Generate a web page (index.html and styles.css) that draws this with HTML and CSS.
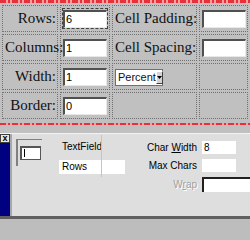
FILE: index.html
```html
<!DOCTYPE html>
<html>
<head>
<meta charset="utf-8">
<link rel="stylesheet" href="styles.css">
</head>
<body>
<div class="design">
  <div class="redline top"></div>
  <table class="grid">
    <colgroup><col class="c1"><col class="c2"><col class="c3"><col class="c4"></colgroup>
    <tr>
      <td class="lbl">Rows:</td>
      <td><span class="focus"><span class="box">6</span></span></td>
      <td class="lbl">Cell Padding:</td>
      <td><span class="box"></span></td>
    </tr>
    <tr>
      <td class="lbl">Columns:</td>
      <td><span class="box">1</span></td>
      <td class="lbl">Cell Spacing:</td>
      <td><span class="box"></span></td>
    </tr>
    <tr>
      <td class="lbl">Width:</td>
      <td><span class="box">1</span></td>
      <td><span class="select"><span class="sel-text">Percent</span><span class="sel-btn"><svg width="5" height="3" viewBox="0 0 5 3"><path d="M0 0h5L2.5 3z" fill="#000"/></svg></span></span></td>
      <td></td>
    </tr>
    <tr>
      <td class="lbl">Border:</td>
      <td><span class="box">0</span></td>
      <td></td>
      <td></td>
    </tr>
  </table>
  <div class="redline bottom"></div>
</div>
<div class="panel">
  <div class="side">
    <span class="close">x</span>
  </div>
  <div class="content">
    <div class="iconbox">
      <span class="tficon"><span class="caret"></span></span>
    </div>
    <div class="namecol">
      <div class="tname">TextField</div>
      <div class="namefield">Rows</div>
    </div>
    <div class="props">
      <div class="prow"><span class="plbl">Char <u>W</u>idth</span><span class="pin">8</span></div>
      <div class="prow"><span class="plbl">Max Chars</span><span class="pin"></span></div>
      <div class="prow"><span class="plbl dis">W<u>r</u>ap</span><span class="pin wrap"></span></div>
    </div>
  </div>
</div>
<div class="status"></div>
</body>
</html>
```
FILE: styles.css
```css
html, body {
  margin: 0;
  padding: 0;
  width: 250px;
  height: 240px;
  overflow: hidden;
  background: #bdbdbd;
}
.design {
  background: #c0c0c0;
  height: 133px;
  overflow: hidden;
}
.redline {
  height: 2px;
  background: repeating-linear-gradient(90deg, #e8303a 0 6px, #f0a0a0 6px 8px, #e8303a 8px 10px, #f0a0a0 10px 12px);
}
.redline.top { height: 3px; }
.redline.bottom { margin-top: 2px; }
.grid {
  border-collapse: separate;
  border-spacing: 2px;
  table-layout: fixed;
  width: 250px;
  font-family: "Liberation Serif", "Times New Roman", serif;
  font-size: 15px;
  color: #111;
}
.c1 { width: 56px; }
.c2 { width: 50px; }
.c3 { width: 85px; }
.c4 { width: 49px; }
.grid td {
  border: 1px dotted #707070;
  height: 25px;
  padding: 0 1px 0 2px;
  white-space: nowrap;
  vertical-align: middle;
}
.lbl { text-align: right; }
.box {
  display: inline-block;
  vertical-align: middle;
  box-sizing: border-box;
  width: 44px;
  height: 18px;
  background: #fff;
  border-style: solid;
  border-width: 2px 1px 1px 2px;
  border-color: #505050 #e8e8e8 #e8e8e8 #505050;
  font-family: "Liberation Sans", Arial, sans-serif;
  font-size: 11px;
  line-height: 14px;
  padding-left: 1px;
  color: #000;
}
.focus {
  display: inline-block;
  vertical-align: middle;
  border: 1px dashed #404040;
  padding: 0;
  margin-left: -1px;
}
.select {
  display: inline-flex;
  vertical-align: middle;
  box-sizing: border-box;
  height: 17px;
  width: 48px;
  background: #fff;
  border: 1px solid #707070;
  font-family: "Liberation Sans", Arial, sans-serif;
  font-size: 11px;
  line-height: 15px;
  align-items: center;
}
.sel-text { flex: 1; padding-left: 2px; }
.sel-btn {
  width: 9px;
  height: 13px;
  margin-right: 1px;
  background: #d4d4d4;
  border: 1px solid;
  border-color: #fff #404040 #404040 #fff;
  box-sizing: border-box;
  display: flex;
  align-items: center;
  justify-content: center;
}
.panel {
  display: flex;
  height: 82px;
  background: #dedede;
  border-top: 1px solid #f4f4f4;
  border-bottom: 3px solid #606060;
  font-family: "Liberation Sans", Arial, sans-serif;
  font-size: 10px;
  color: #000;
}
.side {
  width: 10px;
  background: #000080;
  border-right: 2px solid #a8a8a8;
}
.close {
  display: block;
  box-sizing: border-box;
  width: 10px;
  height: 9px;
  background: #e8e8e8;
  border: 1px solid #404040;
  font-size: 9px;
  font-weight: bold;
  line-height: 6px;
  text-align: center;
  color: #000;
}
.content {
  flex: 1;
  display: flex;
  padding-top: 5px;
}
.iconbox {
  width: 26px;
  height: 27px;
  margin-left: 4px;
  border-top: 1px solid #808080;
  border-left: 2px solid #808080;
  box-sizing: border-box;
  display: flex;
  align-items: center;
  justify-content: center;
}
.tficon {
  width: 18px;
  height: 11px;
  background: #fff;
  border: 1px solid #555;
  border-width: 2px 1px 1px 2px;
  position: relative;
}
.caret {
  position: absolute;
  left: 2px;
  top: 1px;
  width: 1px;
  height: 8px;
  background: #000;
}
.namecol {
  margin-left: 17px;
  width: 66px;
  position: relative;
}
.namecol::after {
  content: "";
  position: absolute;
  left: 42px;
  top: -4px;
  width: 1px;
  height: 42px;
  background: #c4c4c4;
}
.tname {
  padding-left: 3px;
  height: 16px;
  line-height: 16px;
}
.namefield {
  margin-top: 5px;
  background: #fff;
  height: 14px;
  line-height: 14px;
  padding-left: 3px;
}
.props {
  margin-left: auto;
  display: flex;
  flex-direction: column;
  gap: 5px;
  margin-top: 2px;
}
.prow {
  display: flex;
  align-items: center;
  gap: 5px;
}
.plbl {
  width: 70px;
  text-align: right;
}
.plbl.dis {
  color: #a0a0a0;
  text-shadow: 1px 1px 0 #fff;
}
.pin {
  width: 34px;
  height: 13px;
  background: #fff;
  line-height: 13px;
  padding-left: 2px;
  box-sizing: border-box;
}
.pin.wrap {
  width: 48px;
  height: 15px;
  border-top: 2px solid #202020;
  border-left: 2px solid #202020;
}
.status {
  height: 20px;
  background: #bdbdbd;
}
```
